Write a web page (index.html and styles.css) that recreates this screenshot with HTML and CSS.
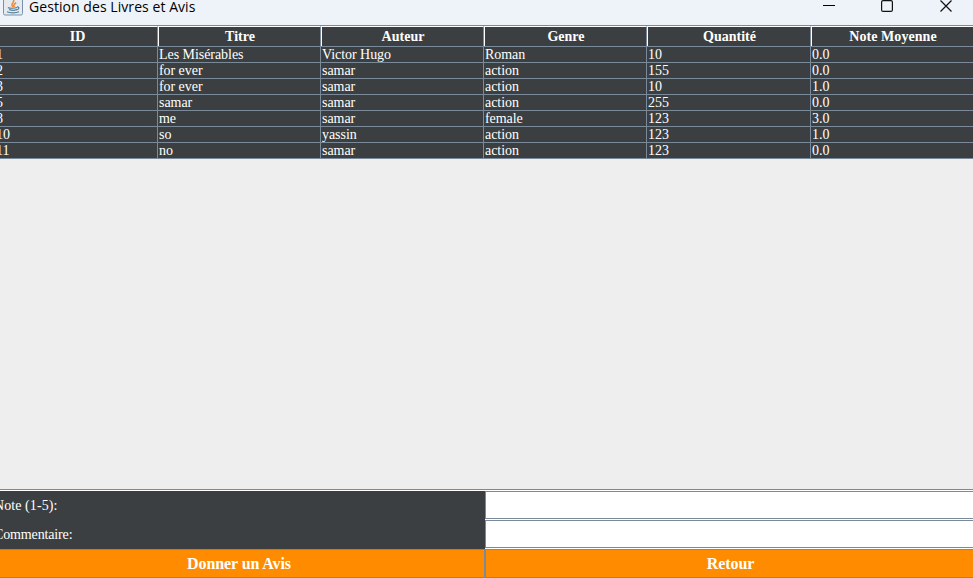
FILE: index.html
```html
<!DOCTYPE html>
<html lang="fr">
<head>
<meta charset="utf-8">
<title>Gestion des Livres et Avis</title>
<link rel="stylesheet" href="styles.css">
</head>
<body>
<header class="titlebar">
  <svg class="java" width="20" height="16" viewBox="0 0 20 16">
    <rect x=".5" y="-4.5" width="19" height="19.5" rx="1.5" fill="#e4eaee" stroke="#7a91a8"/>
    <path d="M10 7C6.500 4 12 3 10.500-1M11.500 7C9.500 5 12 4 13 2.500" fill="none" stroke="#ee8b38" stroke-width="1.500"/>
    <path d="M5 7.500c1 1 7 1 9 0M6 9.500c2 .8 6 .8 8 0M14 7c3-.5 2 2.500-.5 3M4 11.800c3 1.400 9 1.400 12 0" fill="none" stroke="#557f9f" stroke-width="1.200"/>
  </svg>
  <h1 class="caption">Gestion des Livres et Avis</h1>
  <svg class="controls" width="130" height="16" viewBox="0 0 130 16" fill="none" stroke="#111">
    <path d="M0 5.500h12" stroke="#000"/>
    <rect x="58.600" y=".6" width="10.800" height="10.800" rx="1.500" stroke-width="1.200"/>
    <path d="M117.500 .5l11 11M128.500 .5l-11 11" stroke-width="1.200"/>
  </svg>
</header>
<main class="viewport">
  <table class="books">
    <colgroup><col class="c-id"><col class="c"><col class="c"><col class="c"><col class="c-wide"><col class="c"></colgroup>
    <thead><tr><th>ID</th><th>Titre</th><th>Auteur</th><th>Genre</th><th>Quantité</th><th>Note Moyenne</th></tr></thead>
    <tbody>
      <tr><td>1</td><td>Les Misérables</td><td>Victor Hugo</td><td>Roman</td><td>10</td><td>0.0</td></tr>
      <tr><td>2</td><td>for ever</td><td>samar</td><td>action</td><td>155</td><td>0.0</td></tr>
      <tr><td>3</td><td>for ever</td><td>samar</td><td>action</td><td>10</td><td>1.0</td></tr>
      <tr><td>5</td><td>samar</td><td>samar</td><td>action</td><td>255</td><td>0.0</td></tr>
      <tr><td>8</td><td>me</td><td>samar</td><td>female</td><td>123</td><td>3.0</td></tr>
      <tr><td>10</td><td>so</td><td>yassin</td><td>action</td><td>123</td><td>1.0</td></tr>
      <tr><td>11</td><td>no</td><td>samar</td><td>action</td><td>123</td><td>0.0</td></tr>
    </tbody>
  </table>
</main>
<form class="review">
  <label class="label label-note" for="note">Note (1-5):</label><input class="field" id="note">
  <label class="label label-comment" for="comment">Commentaire:</label><input class="field" id="comment">
  <button class="btn btn-left" type="button">Donner un Avis</button><button class="btn btn-right" type="button">Retour</button>
</form>
</body>
</html>
```
FILE: styles.css
```css
* { box-sizing: border-box; }
body {
  margin: 0;
  width: 973px;
  height: 578px;
  overflow: hidden;
  display: flex;
  flex-direction: column;
  background: #eee;
  color: #fff;
  font: 14px/15px "Liberation Serif", "Times New Roman", serif;
}
.titlebar {
  flex: none;
  display: flex;
  align-items: flex-start;
  height: 25px;
  padding: 0 20px 0 3px;
  background: #eef3f9;
  color: #000;
}
.java { flex: none; }
.caption {
  margin: -3px 0 0 6px;
  font: 14px/20px "Open Sans", "Noto Sans", sans-serif;
  letter-spacing: .06px;
}
.controls { margin-left: auto; }
.viewport {
  flex: none;
  height: 465px;
  border-top: 1px solid #7a8a99;
  border-bottom: 1px solid #7a8a99;
}
.books {
  width: 973px;
  table-layout: fixed;
  border-collapse: separate;
  border-spacing: 0;
  background: #3c3f41;
}
.c-id { width: 158px; }
.c { width: 163px; }
.c-wide { width: 164px; }
.books th {
  height: 21px;
  padding: 0 0 1px 2px;
  border-top: 1px solid #fff;
  border-right: 1px solid #7a8a99;
  border-bottom: 1px solid #7a8a99;
  box-shadow: inset 1px 0 #fff;
  line-height: 17px;
}
.books th:first-child { box-shadow: none; padding-left: 0; padding-right: 2px; }
.books th:last-child { padding-left: 1px; letter-spacing: .06px; }
.books th:last-child, .books td:last-child { border-right: 0; }
.books td {
  height: 16px;
  padding: 0 0 0 1px;
  border-right: 1px solid #7a8a99;
  border-bottom: 1px solid #7a8a99;
  letter-spacing: -.05px;
  white-space: nowrap;
}
.books td:first-child { padding: 0; text-indent: -4px; }
.review {
  flex: none;
  display: grid;
  grid-template-columns: 485px 488px;
  grid-template-rows: 29px 29px 29px;
  height: 88px;
  border-top: 1px solid #fff;
}
.label {
  padding-top: 7px;
  background: #3c3f41;
  white-space: nowrap;
}
.label-note { text-indent: -6px; letter-spacing: .08px; }
.label-comment { text-indent: -6px; letter-spacing: -.14px; }
.field {
  width: 488px;
  height: 28px;
  padding: 0 4px;
  border: 1px solid #7a8a99;
  border-right: 0;
  border-radius: 0;
  outline: 0;
  background: #fff;
  box-shadow: 0 1px #fff;
  font: inherit;
}
.btn {
  height: 29px;
  margin: 0;
  padding: 0;
  border: 1px solid #7a8a99;
  border-right: 0;
  border-radius: 0;
  background: #ff8c00;
  color: #fff;
  font: bold 16px/20px "Liberation Serif", "Times New Roman", serif;
  letter-spacing: -.1px;
}
.btn-left { border-left: 0; border-right: 1px solid #7a8a99; padding-right: 6px; }
.btn-right { padding-left: 2px; }
```
